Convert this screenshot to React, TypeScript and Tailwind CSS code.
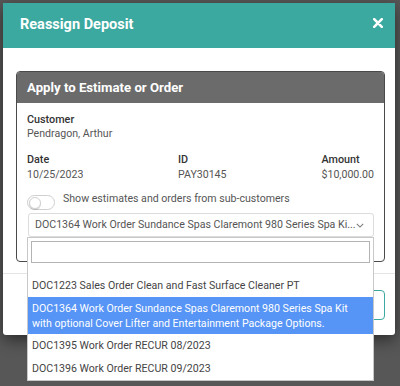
import React from 'react';

const options = [
  { id: 'DOC1223', lines: ['DOC1223 Sales Order Clean and Fast Surface Cleaner PT'] },
  {
    id: 'DOC1364',
    lines: [
      'DOC1364 Work Order Sundance Spas Claremont 980 Series Spa Kit',
      'with optional Cover Lifter and Entertainment Package Options.',
    ],
  },
  { id: 'DOC1395', lines: ['DOC1395 Work Order RECUR 08/2023'] },
  { id: 'DOC1396', lines: ['DOC1396 Work Order RECUR 09/2023'] },
];

export default function App() {
  const selected = 'DOC1364';

  return (
    <div className="w-[400px] h-[386px] bg-[#575757] pt-[3px] pl-[3px] overflow-hidden font-['Roboto',sans-serif]">
      <div className="w-[392px] bg-white rounded-b-[3px] shadow-[0_5px_15px_rgba(0,0,0,0.5)]">
        {/* Modal header */}
        <div className="h-[45px] bg-[#3ba99f] flex items-center justify-between pl-[17px] pr-[12px]">
          <h2 className="text-[14.5px] font-bold text-white leading-none">Reassign Deposit</h2>
          <button className="w-[11px] h-[11px] -mt-[5px] flex items-center justify-center">
            <svg viewBox="0 0 10 10" className="w-[10px] h-[10px]">
              <path d="M1.2 1.2 L8.8 8.8 M8.8 1.2 L1.2 8.8" stroke="white" strokeWidth="2.6" strokeLinecap="round" />
            </svg>
          </button>
        </div>

        {/* Modal body */}
        <div className="pt-[23px] px-[13px] pb-[11px]">
          <div className="w-[369px] border border-[#4a4a4a] rounded-[4px]">
            <div className="h-[31px] bg-[#6b6b6b] rounded-t-[3px] flex items-center px-[10px]">
              <span className="text-[13.2px] font-bold text-white">Apply to Estimate or Order</span>
            </div>

            <div className="px-[10px] pt-[10px] pb-[24px] text-[10.6px] leading-[14px]">
              <div className="font-medium text-[#333] text-[10.8px]">Customer</div>
              <div className="text-[#555]">Pendragon, Arthur</div>

              <div className="mt-[12px] flex">
                <div className="w-[151px]">
                  <div className="font-medium text-[#333] text-[10.8px]">Date</div>
                  <div className="text-[#555] mt-[1px]">10/25/2023</div>
                </div>
                <div className="flex-1">
                  <div className="font-medium text-[#333] text-[10.8px]">ID</div>
                  <div className="text-[#555] mt-[1px]">PAY30145</div>
                </div>
                <div className="text-left">
                  <div className="font-medium text-[#333] text-[10.8px]">Amount</div>
                  <div className="text-[#555] mt-[1px]">$10,000.00</div>
                </div>
              </div>

              <div className="mt-[10px] flex items-start gap-[8px]">
                <div className="mt-[3px] w-[28px] h-[15px] rounded-full border border-[#cfcfcf] bg-white flex items-center px-[1px]">
                  <div className="w-[12px] h-[12px] rounded-full bg-white border border-[#d0d0d0] shadow-[0_1px_1px_rgba(0,0,0,0.15)]" />
                </div>
                <span className="text-[#555]">Show estimates and orders from sub-customers</span>
              </div>

              {/* Select with open dropdown */}
              <div className="relative mt-[3px] ml-[1px]">
                <div className="h-[24px] border border-[#dcdcdc] rounded-[3px] flex items-center justify-between pl-[6px] pr-[9px]">
                  <span className="text-[#555] whitespace-nowrap">
                    DOC1364 Work Order Sundance Spas Claremont 980 Series Spa Ki...
                  </span>
                  <svg viewBox="0 0 10 6" className="w-[8px] h-[5px]">
                    <path d="M1 1 L5 5 L9 1" fill="none" stroke="#777" strokeWidth="1.3" />
                  </svg>
                </div>

                <div className="absolute top-full -left-[1px] right-0 bg-white border border-[#c8c8c8] z-10">
                  <div className="p-[3px] pb-[11px]">
                    <div className="h-[22px] border border-[#b3b3b3]" />
                  </div>
                  <ul className="leading-[15px]">
                    {options.map((o) => (
                      <li
                        key={o.id}
                        className={
                          o.id === selected
                            ? 'bg-[#5694f5] text-white px-[4px] py-[3.5px]'
                            : 'text-[#444] px-[4px] py-[4px]'
                        }
                      >
                        {o.lines.map((l) => (
                          <div key={l} className="whitespace-nowrap">
                            {l}
                          </div>
                        ))}
                      </li>
                    ))}
                  </ul>
                </div>
              </div>
            </div>
          </div>
        </div>

        {/* Modal footer */}
        <div className="h-[62px] border-t border-[#e5e5e5] flex items-center justify-end gap-[8px] px-[10px]">
          <button className="h-[30px] px-[16px] rounded-[4px] border border-[#bbb] text-[12px] text-[#555]">Cancel</button>
          <button className="h-[30px] px-[20px] rounded-[4px] border border-[#3ba99f] text-[12px] text-[#3ba99f]">Apply</button>
        </div>
      </div>
    </div>
  );
}
